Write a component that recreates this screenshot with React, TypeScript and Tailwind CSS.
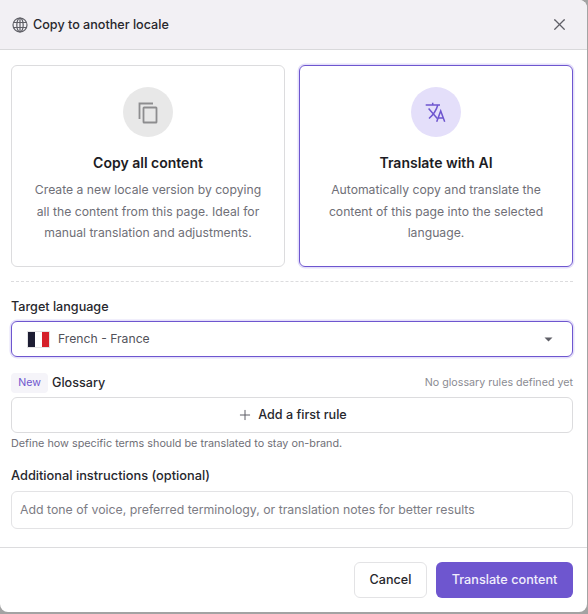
import { X, Plus } from "lucide-react";

function Card({ active, icon, title, lines }: { active?: boolean; icon: React.ReactNode; title: string; lines: string[] }) {
  return (
    <div
      className={
        active
          ? "flex-1 h-[202px] rounded-[6px] border border-[#6e56cf] shadow-[0_0_0_1.5px_#e4dffa] flex flex-col items-center pt-[21px]"
          : "flex-1 h-[202px] rounded-[6px] border border-[#dcdcde] flex flex-col items-center pt-[21px]"
      }
    >
      <div className={active ? "w-[50px] h-[50px] rounded-full bg-[#e4dffa] text-[#6e56cf]" : "w-[50px] h-[50px] rounded-full bg-[#e8e8e8] text-[#8d8d8f]"}>
        {icon}
      </div>
      <div className="mt-[16px] text-[14px] leading-[20px] font-semibold text-[#1c1c24]">{title}</div>
      <div className="mt-[6px] text-[12.2px] leading-[21.5px] text-[#6f6f77] text-center">
        {lines.map((l) => (
          <div key={l}>{l}</div>
        ))}
      </div>
    </div>
  );
}

const CopyIcon = (
  <svg width="50" height="50" viewBox="0 0 50 50" fill="none" stroke="currentColor" strokeWidth="1.8">
    <path d="M16.5 32V16.5H30" />
    <rect x="20.5" y="20.5" width="13" height="15" rx="0.6" />
  </svg>
);

const TranslateIcon = (
  <svg width="50" height="50" viewBox="0 0 50 50" fill="none" stroke="currentColor" strokeWidth="1.5">
    <path d="M14.7 18H29M21.7 15.8V18M17.6 21.5L26.3 31.5M18 31.5C22 28 25.3 23.5 26.8 18" />
    <path d="M25.7 34.8L29.7 24L33.7 34.8M27 31H32.4" />
  </svg>
);

export default function App() {
  return (
    <div className="w-[588px] h-[614px] bg-[#a3a3a3] overflow-hidden font-['Inter',sans-serif]">
      <div className="w-[587px] h-[612px] bg-white rounded-b-[8px] rounded-tr-[8px] flex flex-col">
        <div className="h-[50px] shrink-0 bg-[#f2f0f4] border-b border-[#d9d9db] rounded-tr-[8px] flex items-center pl-[12px] pr-[18px]">
          <svg width="16" height="16" viewBox="0 0 16 16" fill="none" stroke="#5f5f66" strokeWidth="1.2">
            <circle cx="8" cy="8" r="7" />
            <ellipse cx="8" cy="8" rx="3.2" ry="7" />
            <path d="M8 1V15M1.6 5.5H14.4M1.6 10.5H14.4" />
          </svg>
          <span className="ml-[5px] mt-[1px] text-[12.6px] font-medium text-[#27272d]">Copy to another locale</span>
          <X size={19} strokeWidth={1.6} className="ml-auto text-[#5f5f66]" />
        </div>

        <div className="flex-1 pl-[11px] pr-[14px] pt-[15px]">
          <div className="flex gap-[14px]">
            <Card
              icon={CopyIcon}
              title="Copy all content"
              lines={["Create a new locale version by copying", "all the content from this page. Ideal for", "manual translation and adjustments."]}
            />
            <Card
              active
              icon={TranslateIcon}
              title="Translate with AI"
              lines={["Automatically copy and translate the", "content of this page into the selected", "language."]}
            />
          </div>

          <div className="mt-[14px] border-t border-dashed border-[#dcdcde]" />

          <div className="mt-[16px] text-[12.6px] leading-[18px] font-medium text-[#27272d]">Target language</div>
          <div className="mt-[5px] h-[36px] rounded-[6px] border border-[#6e56cf] shadow-[0_0_0_1.5px_#e4dffa] flex items-center pl-[15px] pr-[19px]">
            <div className="w-[23px] h-[17px] flex border border-[#e3e3e5]">
              <div className="flex-1 bg-[#1d1d33]" />
              <div className="flex-1 bg-white" />
              <div className="flex-1 bg-[#d5202a]" />
            </div>
            <span className="ml-[8px] mt-[1px] text-[12.2px] text-[#52525a]">French - France</span>
            <svg width="9" height="5" viewBox="0 0 9 5" className="ml-auto fill-[#5f5f66]">
              <path d="M0.5 0.5h8L4.5 4.5z" />
            </svg>
          </div>

          <div className="mt-[16px] h-[20px] flex items-center">
            <span className="h-[20px] w-[37px] rounded-[4px] bg-[#f5f4f9] flex items-center justify-center text-[10.6px] text-[#6e56cf]">New</span>
            <span className="ml-[4px] text-[12.6px] font-medium text-[#27272d]">Glossary</span>
            <span className="ml-auto text-[10.7px] text-[#8b8b92]">No glossary rules defined yet</span>
          </div>

          <div className="mt-[4px] h-[36px] rounded-[6px] border border-[#dcdcde] flex items-center justify-center">
            <Plus size={16} strokeWidth={1.5} className="text-[#5f5f66]" />
            <span className="ml-[5px] text-[12.6px] font-medium text-[#27272d]">Add a first rule</span>
          </div>

          <div className="mt-[3px] text-[10.8px] leading-[16px] text-[#6f6f77]">Define how specific terms should be translated to stay on-brand.</div>

          <div className="mt-[15px] text-[12.8px] leading-[18px] font-medium text-[#27272d]">Additional instructions (optional)</div>
          <div className="mt-[6px] h-[38px] rounded-[6px] border border-[#e3e3e5] flex items-center pl-[8px] text-[12.3px] text-[#7c7c84]">
            Add tone of voice, preferred terminology, or translation notes for better results
          </div>
        </div>

        <div className="h-[65px] shrink-0 border-t border-[#dcdcde] flex items-center justify-end gap-[9px] pr-[14px]">
          <div className="h-[36px] w-[73px] rounded-[6px] border border-[#e3e3e5] flex items-center justify-center text-[12.6px] font-medium text-[#27272d]">Cancel</div>
          <div className="h-[36px] w-[137px] rounded-[6px] bg-[#6e56cf] flex items-center justify-center text-[12.7px] font-medium text-[#f1eefc]">Translate content</div>
        </div>
      </div>
    </div>
  );
}
